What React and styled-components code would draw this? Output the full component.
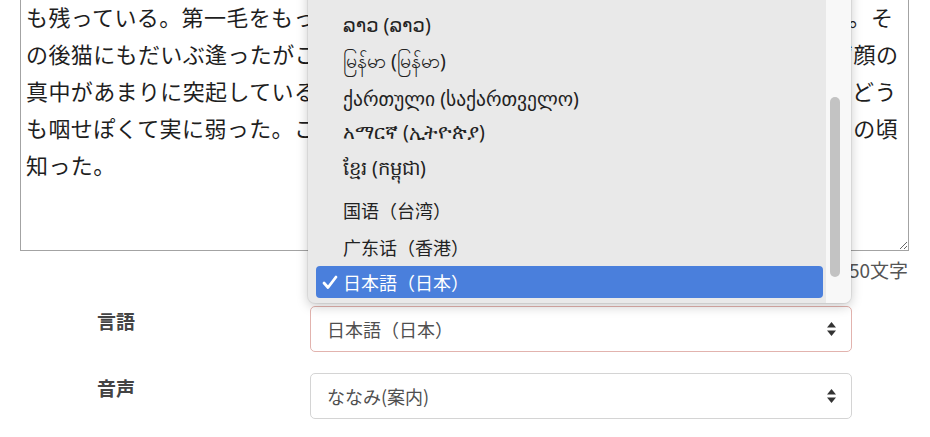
import React from "react";
import styled, { createGlobalStyle } from "styled-components";

const GlobalStyle = createGlobalStyle`
  body {
    margin: 0;
    background: #fff;
    font-family: "Noto Sans CJK JP", "Noto Sans", sans-serif;
    overflow: hidden;
  }
`;

const Page = styled.div`
  // page is scrolled a little: textarea top is above the window
  margin-top: -9px;
  padding: 0 21px 0 20px;
`;

const TextBox = styled.textarea`
  display: block;
  box-sizing: border-box;
  width: 100%;
  height: 260px;
  margin: 0;
  padding: 6px 5px;
  border: 1px solid #a3a3a3;
  border-radius: 0;
  font-family: "Noto Sans CJK JP", sans-serif;
  font-size: 22px;
  letter-spacing: 0.38px;
  line-height: 37px;
  color: #1e1e1e;
  background: #fff;
  overflow: hidden;
  outline: none;
`;

const Counter = styled.div`
  text-align: right;
  font-size: 19px;
  line-height: 26px;
  color: #555;
  margin-top: 6px;
  padding-right: 1px;
`;

const Form = styled.div`
  display: flex;
  flex-direction: column;
  gap: 21px;
  margin-top: 23px;
  padding-left: 77px;
`;

const Row = styled.div`
  display: flex;
  align-items: flex-start;
`;

const Label = styled.div`
  width: 213px;
  flex: none;
  padding-top: 2px;
  font-size: 19px;
  font-weight: 700;
  line-height: 26px;
  color: #444;
`;

const SelectWrap = styled.div`
  position: relative;
  width: 542px;
`;

const SelectBox = styled.div`
  box-sizing: border-box;
  height: 46px;
  display: flex;
  align-items: center;
  justify-content: space-between;
  padding: 0 14px 0 16px;
  border: 1px solid ${p => (p.$invalid ? "#e2b3ae" : "#d4d4d4")};
  border-radius: 5px;
  background: #fff;
  font-size: 18px;
  color: #4f4f4f;
`;

const Menu = styled.div`
  position: absolute;
  left: -2px;
  bottom: calc(100% + 3px);
  width: 543px;
  height: 340px;
  box-sizing: border-box;
  display: flex;
  background: #e9e9e9;
  border-radius: 7px;
  box-shadow: 0 3px 12px rgba(0, 0, 0, 0.22), 0 0 0 1px rgba(0, 0, 0, 0.06);
  overflow: hidden;
`;

const List = styled.div`
  flex: 1;
  display: flex;
  flex-direction: column;
  justify-content: flex-end;
  padding: 0 3px 5px 8px;
`;

const Item = styled.div`
  height: ${p => p.$h}px;
  flex: none;
  display: flex;
  align-items: center;
  padding-left: 27px;
  border-radius: 4px;
  font-family: ${p =>
    p.$cjk
      ? `"${p.$cjk}", sans-serif`
      : '"Noto Sans", "DejaVu Sans", "Noto Sans CJK JP", sans-serif'};
  font-size: ${p => (p.$cjk ? 18 : 19.5)}px;
  color: #222;
  white-space: nowrap;
  ${p =>
    p.$selected &&
    `
    position: relative;
    background: #4a7fdc;
    color: #fff;
  `}
`;

const Check = styled.svg`
  position: absolute;
  left: 6px;
  top: 9px;
`;

const Track = styled.div`
  width: 25px;
  flex: none;
  background: #f8f8f8;
  position: relative;
`;

const Thumb = styled.div`
  position: absolute;
  left: 4px;
  top: 134px;
  width: 10px;
  height: 180px;
  border-radius: 5px;
  background: #c3c3c3;
`;

const Arrows = () => (
  <svg width="11" height="16" viewBox="0 0 11 16">
    <path d="M5.5 1 L10 6.5 H1 Z" fill="#333" />
    <path d="M5.5 15 L10 9.5 H1 Z" fill="#333" />
  </svg>
);

const text = [
  "も残っている。第一毛をもって装飾されべきはずの顔がつるつるしてまるで薬缶だ。そ",
  "の後猫にもだいぶ逢ったがこんな片輪には一度も出会わした事がない。のみならず顔の",
  "真中があまりに突起している。そうしてその穴の中から時々ぷうぷうと煙を吹く。どう",
  "も咽せぽくて実に弱った。これが人間の飲む煙草というものである事はようやくこの頃",
  "知った。",
].join("\n");

const languages = [
  { label: "ไทย (ไทย)", h: 37 },
  { label: "ລາວ (ລາວ)", h: 37 },
  { label: "မြန်မာ (မြန်မာ)", h: 38 },
  { label: "ქართული (საქართველო)", h: 34 },
  { label: "አማርኛ (ኢትዮጵያ)", h: 32 },
  { label: "ខ្មែរ (កម្ពុជា)", h: 45 },
  { label: "国语（台湾）", h: 36, cjk: "Noto Sans CJK SC" },
  { label: "广东话（香港）", h: 38, cjk: "Noto Sans CJK SC" },
  { label: "日本語（日本）", h: 32, cjk: "Noto Sans CJK JP", selected: true },
];

const App = () => {
  return (
    <>
      <GlobalStyle />
      <Page>
        <TextBox defaultValue={text} spellCheck={false} />
        <Counter>250文字</Counter>
        <Form>
          <Row>
            <Label>言語</Label>
            <SelectWrap>
              <SelectBox $invalid>
                <span>日本語（日本）</span>
                <Arrows />
              </SelectBox>
              <Menu>
                <List>
                  {languages.map(l => (
                    <Item key={l.label} $h={l.h} $cjk={l.cjk} $selected={l.selected}>
                      {l.selected && (
                        <Check width="16" height="15" viewBox="0 0 16 15">
                          <path
                            d="M2 8 L6 12.5 L14 2"
                            fill="none"
                            stroke="#fff"
                            strokeWidth="2.8"
                            strokeLinecap="round"
                            strokeLinejoin="round"
                          />
                        </Check>
                      )}
                      {l.label}
                    </Item>
                  ))}
                </List>
                <Track>
                  <Thumb />
                </Track>
              </Menu>
            </SelectWrap>
          </Row>
          <Row>
            <Label>音声</Label>
            <SelectWrap>
              <SelectBox>
                <span>ななみ(案内)</span>
                <Arrows />
              </SelectBox>
            </SelectWrap>
          </Row>
        </Form>
      </Page>
    </>
  );
};

export default App;
